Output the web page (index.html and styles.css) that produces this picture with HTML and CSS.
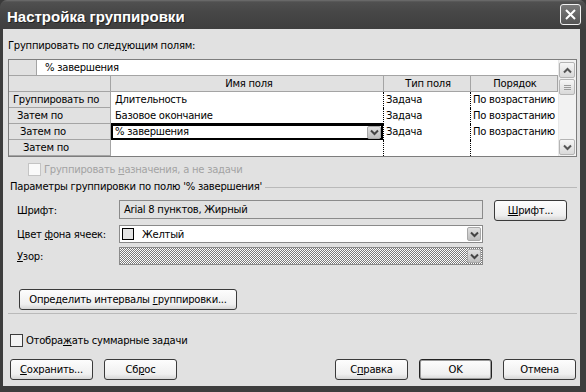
FILE: index.html
```html
<!DOCTYPE html>
<html lang="ru">
<head>
    <meta charset="UTF-8">
    <title>Настройка группировки</title>
    <link rel="stylesheet" href="styles.css">
</head>
<body>
    <div class="window">
        <!-- Title bar -->
        <div class="titlebar">
            <span class="title">Настройка группировки</span>
            <button class="close">
                <svg width="11" height="11" viewBox="0 0 11 11"><path d="M1 1 10 10M10 1 1 10" stroke="#fff" stroke-width="2"/></svg>
            </button>
        </div>

        <div class="client">
            <div class="caption">Группировать по след<u>у</u>ющим полям:</div>

            <!-- Grouping grid -->
            <div class="grid">
                <div class="grid-main">
                    <div class="editline">
                        <div class="edit-gap"></div>
                        <div class="edit-text">% завершения</div>
                    </div>
                    <div class="row head">
                        <div class="rh"></div>
                        <div class="c name">Имя поля</div>
                        <div class="c type">Тип поля</div>
                        <div class="c order">Порядок</div>
                    </div>
                    <div class="row">
                        <div class="rh lvl-1">Группировать по</div>
                        <div class="c name">Длительность</div>
                        <div class="c type">Задача</div>
                        <div class="c order">По возрастанию</div>
                    </div>
                    <div class="row">
                        <div class="rh lvl-2">Затем по</div>
                        <div class="c name">Базовое окончание</div>
                        <div class="c type">Задача</div>
                        <div class="c order">По возрастанию</div>
                    </div>
                    <div class="row">
                        <div class="rh lvl-3">Затем по</div>
                        <div class="c name selected">
                            <span>% завершения</span>
                            <span class="drop small">
                                <svg width="9" height="7" viewBox="0 0 9 7"><path d="M1 1.5 4.5 5 8 1.5" fill="none" stroke="#444" stroke-width="2"/></svg>
                            </span>
                        </div>
                        <div class="c type">Задача</div>
                        <div class="c order">По возрастанию</div>
                    </div>
                    <div class="row">
                        <div class="rh lvl-4">Затем по</div>
                        <div class="c name"></div>
                        <div class="c type"></div>
                        <div class="c order"></div>
                    </div>
                </div>
                <div class="scroll">
                    <div class="sbtn">
                        <svg width="9" height="7" viewBox="0 0 9 7"><path d="M1 5.5 4.5 2 8 5.5" fill="none" stroke="#555" stroke-width="2"/></svg>
                    </div>
                    <div class="sthumb"><i></i><i></i><i></i></div>
                    <div class="strack"></div>
                    <div class="sbtn">
                        <svg width="9" height="7" viewBox="0 0 9 7"><path d="M1 1.5 4.5 5 8 1.5" fill="none" stroke="#555" stroke-width="2"/></svg>
                    </div>
                </div>
            </div>

            <label class="check disabled assign">
                <span class="box"></span>
                <span>Группировать <u>н</u>азначения, а не задачи</span>
            </label>

            <div class="group-title">
                <span>Параметры группировки по полю '% завершения'</span>
                <span class="rule"></span>
            </div>

            <div class="form-row first">
                <span class="lbl">Шрифт:</span>
                <div class="field">Arial 8 пунктов, Жирный</div>
                <button class="btn font-btn"><u>Ш</u>рифт...</button>
            </div>
            <div class="form-row">
                <span class="lbl">Цвет <u>ф</u>она ячеек:</span>
                <div class="combo">
                    <span class="swatch"></span>
                    <span class="combo-text">Желтый</span>
                    <span class="drop">
                        <svg width="9" height="7" viewBox="0 0 9 7"><path d="M1 1.5 4.5 5 8 1.5" fill="none" stroke="#444" stroke-width="2"/></svg>
                    </span>
                </div>
            </div>
            <div class="form-row">
                <span class="lbl"><u>У</u>зор:</span>
                <div class="combo pattern">
                    <span class="drop">
                        <svg width="9" height="7" viewBox="0 0 9 7"><path d="M1 1.5 4.5 5 8 1.5" fill="none" stroke="#444" stroke-width="2"/></svg>
                    </span>
                </div>
            </div>

            <button class="btn interval-btn">Определить интервалы <u>г</u>руппировки...</button>

            <div class="separator"></div>

            <label class="check summary">
                <span class="box"></span>
                <span>Отобра<u>ж</u>ать суммарные задачи</span>
            </label>

            <!-- Dialog buttons -->
            <div class="buttons">
                <button class="btn save"><u>С</u>охранить...</button>
                <button class="btn"><span>Сб<u>р</u>ос</span></button>
                <span class="spacer"></span>
                <button class="btn">С<u>п</u>равка</button>
                <button class="btn default">OK</button>
                <button class="btn">Отмена</button>
            </div>
        </div>
    </div>
</body>
</html>
```

FILE: styles.css
```css
/* Base */
* {
    box-sizing: border-box;
}

body {
    margin: 0;
    background: #3a3a3a;
    font-family: "DejaVu Sans", sans-serif;
    font-size: 10px;
    letter-spacing: -0.25px;
    color: #000;
}

u {
    text-decoration: underline;
    text-underline-offset: 1px;
}

/* Window frame */
.window {
    width: 586px;
    height: 392px;
    display: flex;
    flex-direction: column;
    background: #3d3d3d;
    border-radius: 7px 7px 0 0;
    overflow: hidden;
}

.titlebar {
    height: 29px;
    flex-shrink: 0;
    display: flex;
    align-items: center;
    padding: 0 5px 0 7px;
    background: linear-gradient(#707070 0, #505050 2px, #474747 40%, #3e3e3e 100%);
}

.title {
    flex: 1;
    color: #fff;
    font: bold 15px "Liberation Sans", sans-serif;
    letter-spacing: 0;
    text-shadow: 1px 1px 0 #222;
    padding-top: 3px;
}

.close {
    width: 21px;
    height: 21px;
    padding: 0;
    border: 1px solid #f2f2f2;
    border-radius: 3px;
    background: linear-gradient(#7a7a7a, #555);
    display: flex;
    align-items: center;
    justify-content: center;
}

.client {
    flex: 1;
    margin: 0 6px 6px 3px;
    padding: 10px 3px 0 5px;
    background: #e1e1e1;
    display: flex;
    flex-direction: column;
}

.caption {
    height: 14px;
    line-height: 14px;
}

/* Grid */
.grid {
    margin-top: 6px;
    width: 569px;
    height: 98px;
    display: flex;
    border: 1px solid #7d7d7d;
    background: #fff;
}

.grid-main {
    width: 549px;
    display: flex;
    flex-direction: column;
}

.editline {
    height: 16px;
    display: flex;
    border-bottom: 1px solid #a4a4a4;
}

.edit-gap {
    width: 28px;
    background: #e1e1e1;
    border-right: 1px solid #a4a4a4;
}

.edit-text {
    flex: 1;
    padding-left: 8px;
    line-height: 15px;
}

.row {
    height: 16px;
    display: flex;
}

.rh {
    width: 102px;
    background: #e1e1e1;
    border-right: 1px solid #a4a4a4;
    border-bottom: 1px solid #a4a4a4;
    line-height: 15px;
    white-space: nowrap;
}

.lvl-1 { padding-left: 4px; }
.lvl-2 { padding-left: 8px; }
.lvl-3 { padding-left: 11px; }
.lvl-4 { padding-left: 14px; }

.c {
    line-height: 16px;
    white-space: nowrap;
    overflow: hidden;
    padding-left: 2px;
}

.name { width: 273px; padding-left: 4px; }
.type { width: 87px; }
.order { width: 87px; }

.row .name,
.row .type {
    border-right: 1px dotted #000;
}

.head .c {
    background: #e1e1e1;
    border-right: 1px solid #a4a4a4;
    border-bottom: 1px solid #a4a4a4;
    text-align: center;
    line-height: 15px;
}

.selected {
    display: flex;
    align-items: center;
    justify-content: space-between;
    box-shadow: inset 0 0 0 2px #000, 0 -1px 0 #000;
    padding-right: 2px;
}

/* Scrollbar */
.scroll {
    width: 18px;
    background: #f2f2f2;
    border-left: 1px solid #e8e8e8;
    padding: 2px 1px 1px 0;
    display: flex;
    flex-direction: column;
}

.sbtn,
.sthumb {
    height: 16px;
    border: 1px solid #b4b4b4;
    border-radius: 2px;
    background: linear-gradient(#f6f6f6, #d9d9d9);
    display: flex;
    align-items: center;
    justify-content: center;
}

.sthumb {
    margin-top: 1px;
    flex-direction: column;
    gap: 1px;
}

.sthumb i {
    width: 7px;
    height: 1px;
    background: #9a9a9a;
}

.strack {
    flex: 1;
}

/* Check boxes */
.check {
    display: flex;
    align-items: center;
    gap: 3px;
    height: 13px;
}

.box {
    width: 13px;
    height: 13px;
    border: 1px solid #3c3c3c;
    background: #f4f4f4;
}

.assign {
    margin: 6px 0 0 20px;
}

.disabled {
    color: #a3a3a3;
}

.disabled .box {
    border-color: #c4c4c4;
    background: #fafafa;
}

.group-title {
    margin-top: 4px;
    height: 14px;
    line-height: 14px;
    display: flex;
    align-items: center;
    padding-left: 2px;
}

.rule {
    flex: 1;
    height: 1px;
    margin-left: 3px;
    background: #b9b9b9;
}

/* Option rows */
.form-row {
    margin-top: 4px;
    display: flex;
    align-items: center;
}

.form-row.first {
    margin-top: 6px;
    align-items: flex-start;
}

.lbl {
    width: 111px;
    padding-left: 9px;
}

.form-row.first .lbl {
    line-height: 21px;
}

.field,
.combo {
    width: 364px;
    height: 18px;
    border: 1px solid #8a8a8a;
    display: flex;
    align-items: center;
}

.field {
    height: 19px;
    padding-left: 4px;
    background: #e1e1e1;
}

.combo {
    background: #fff;
    padding: 0 1px 0 2px;
}

.combo.pattern {
    background: repeating-conic-gradient(#7a7a7a 0 25%, #fff 0 50%) 0 0 / 2px 2px;
}

.swatch {
    width: 12px;
    height: 12px;
    border: 1px solid #000;
    background: #e3e3e3;
}

.combo-text {
    flex: 1;
    padding-left: 8px;
}

.drop {
    width: 14px;
    height: 14px;
    margin-left: auto;
    border: 1px solid #a8a8a8;
    border-radius: 2px;
    background: linear-gradient(#e0e0e0, #bdbdbd);
    display: flex;
    align-items: center;
    justify-content: center;
}

.drop.small {
    height: 13px;
}

/* Buttons */
.btn {
    height: 21px;
    width: 73px;
    padding: 0;
    border: 1px solid #3a3a3a;
    border-radius: 3px;
    background: linear-gradient(#fdfdfd, #efefef 75%, #d6d6d6);
    font: inherit;
    letter-spacing: inherit;
    color: #000;
}

.font-btn {
    margin-left: 11px;
}

.interval-btn {
    margin: 24px 0 0 11px;
    width: 218px;
}

.separator {
    margin-top: 3px;
    height: 1px;
    background: #b9b9b9;
}

.summary {
    margin: 20px 0 0 2px;
}

.buttons {
    margin-top: 12px;
    display: flex;
    gap: 11px;
    padding-left: 2px;
    padding-right: 1px;
}

.btn.save {
    width: 83px;
}

.btn.default {
    border-color: #222;
    box-shadow: inset 0 0 0 1px #9a9a9a;
}

.spacer {
    flex: 1;
}
```
